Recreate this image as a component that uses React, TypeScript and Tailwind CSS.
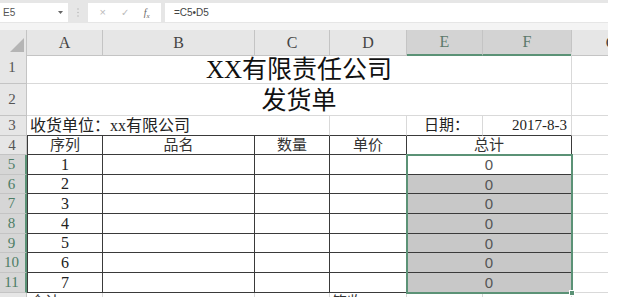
import React from 'react';

// Column letters with their widths (row header first)
const cols = ['A', 'B', 'C', 'D', 'E', 'F', 'G'];
const serif = "font-['Liberation_Serif','Noto_Sans_CJK_SC',serif]";
const gridCols = 'grid grid-cols-[27px_76px_152px_75px_77px_76px_89px_80px]';

const light = 'border-r border-b border-[#d9d9d9]';
const dark = 'border-r border-b border-[#3a3a3a]';

const bodyRows = [
  { n: 5, v: '1', h: 'h-[20px]' },
  { n: 6, v: '2', h: 'h-[19px]' },
  { n: 7, v: '3', h: 'h-[20px]' },
  { n: 8, v: '4', h: 'h-[20px]' },
  { n: 9, v: '5', h: 'h-[19px]' },
  { n: 10, v: '6', h: 'h-[20px]' },
  { n: 11, v: '7', h: 'h-[20px]' },
];

function RowHead({ n, active = false }: { n: number; active?: boolean }) {
  return (
    <div
      className={
        active
          ? 'flex items-center justify-center bg-[#d6d6d6] border-b border-[#c4c4c4] border-r-2 border-r-[#5b9276] text-[15px] leading-none text-[#4d7d65] pr-[2px]'
          : 'flex items-center justify-center bg-[#e6e6e6] border-b border-r border-[#c4c4c4] text-[15px] leading-none text-[#555] pr-[2px]'
      }
    >
      {n}
    </div>
  );
}

function FormulaBar() {
  return (
    <div className="h-[30px] w-[608px] bg-[#f4f4f4]">
      <div className="flex h-[23px] items-start gap-0 bg-[#e6e6e6] pt-[3px] font-['Liberation_Sans',sans-serif] text-[10px] text-[#555]">
        <div className="flex h-[19px] w-[68px] items-center justify-between bg-white pl-[3px] pr-[5px]">
          <span>E5</span>
          <svg width="5" height="3" viewBox="0 0 5 3">
            <path d="M0 0h5L2.5 3z" fill="#666" />
          </svg>
        </div>
        <div className="flex h-[19px] w-[20px] items-center justify-center">
          <svg width="2" height="9" viewBox="0 0 2 9">
            <circle cx="1" cy="1" r="0.8" fill="#bbb" />
            <circle cx="1" cy="4.5" r="0.8" fill="#bbb" />
            <circle cx="1" cy="8" r="0.8" fill="#bbb" />
          </svg>
        </div>
        <div className="flex h-[19px] w-[73px] items-center justify-around bg-white px-[4px] text-[#bbb]">
          <span className="text-[11px]">×</span>
          <span className="text-[10px]">✓</span>
          <span className="font-['Liberation_Serif',serif] text-[10px] italic text-[#666]">
            f<sub className="text-[7px]">x</sub>
          </span>
        </div>
        <div className="ml-[4px] flex h-[19px] flex-1 items-center bg-white pl-[9px] text-[#444]">=C5•D5</div>
      </div>
    </div>
  );
}

export default function App() {
  return (
    <div className={`relative h-[297px] w-[620px] overflow-hidden bg-white ${serif}`}>
      <FormulaBar />
      <div className="relative w-[608px] overflow-hidden">
        {/* column header */}
        <div className={`${gridCols} h-[22px]`}>
          <div className="flex items-end justify-end border-b border-r border-[#c4c4c4] bg-[#e6e6e6] pb-[2px] pr-[2px]">
            <svg width="15" height="15" viewBox="0 0 15 15">
              <path d="M15 0V15H0z" fill="#b5b5b5" />
            </svg>
          </div>
          {cols.map((c) => {
            const sel = c === 'E' || c === 'F';
            return (
              <div
                key={c}
                className={
                  sel
                    ? 'flex items-center justify-center border-r border-[#c4c4c4] border-b-2 border-b-[#5b9276] bg-[#d3d3d3] text-[16px] text-[#5b7a6a]'
                    : 'flex items-center justify-center border-b border-r border-[#c4c4c4] bg-[#e6e6e6] text-[16px] text-[#444]'
                }
              >
                {c}
              </div>
            );
          })}
        </div>

        {/* row 1: title */}
        <div className={`${gridCols} h-[32px]`}>
          <RowHead n={1} />
          <div className={`col-span-6 flex items-end justify-center pb-[1px] text-[25px] leading-none text-[#111] ${light}`}>
            XX有限责任公司
          </div>
          <div className={light} />
        </div>

        {/* row 2: subtitle */}
        <div className={`${gridCols} h-[32px]`}>
          <RowHead n={2} />
          <div className={`col-span-6 flex items-end justify-center pb-[2px] text-[25px] leading-none text-[#111] ${light}`}>
            发货单
          </div>
          <div className={light} />
        </div>

        {/* row 3: receiver and date */}
        <div className={`${gridCols} h-[20px]`}>
          <RowHead n={3} />
          <div className="col-span-3 flex items-center border-b border-r border-b-[#3a3a3a] border-r-[#d9d9d9] pl-[3px] text-[16px] leading-none text-[#222]">
            收货单位：xx有限公司
          </div>
          <div className="border-b border-r border-b-[#3a3a3a] border-r-[#d9d9d9]" />
          <div className="flex items-center justify-center border-b border-r border-b-[#3a3a3a] border-r-[#d9d9d9] pl-[4px] text-[15px] leading-none text-[#222]">
            日期：
          </div>
          <div className="flex items-center justify-end border-b border-r border-b-[#3a3a3a] border-r-[#d9d9d9] pr-[4px] text-[15px] leading-none text-[#222]">
            2017-8-3
          </div>
          <div className={light} />
        </div>

        {/* row 4: table header */}
        <div className={`${gridCols} h-[19px]`}>
          <RowHead n={4} />
          {['序列', '品名', '数量', '单价'].map((t, i) => (
            <div
              key={t}
              className={`flex items-center justify-center text-[15px] leading-none text-[#333] ${dark} ${i === 0 ? 'border-l' : ''}`}
            >
              {t}
            </div>
          ))}
          <div className={`col-span-2 flex items-center justify-center text-[15px] leading-none text-[#333] ${dark}`}>总计</div>
          <div className={light} />
        </div>

        {/* rows 5-11 */}
        {bodyRows.map((r, i) => (
          <div key={r.n} className={`${gridCols} ${r.h}`}>
            <RowHead n={r.n} active />
            <div className={`flex items-center justify-center border-l text-[16px] leading-none text-[#222] ${dark}`}>{r.v}</div>
            <div className={dark} />
            <div className={dark} />
            <div className={dark} />
            <div
              className={`col-span-2 flex items-center justify-center font-['Liberation_Sans',sans-serif] text-[15px] leading-none text-[#555] ${dark} ${
                i === 0 ? 'bg-white' : 'bg-[#c8c8c8]'
              }`}
            >
              0
            </div>
            <div className={light} />
          </div>
        ))}

        {/* row 12, cut off by the window */}
        <div className={`${gridCols} h-[20px]`}>
          <RowHead n={12} />
          <div className={`flex items-start pl-[3px] pt-[2px] text-[15px] leading-none text-[#333] ${light}`}>合计：</div>
          <div className={light} />
          <div className={light} />
          <div className={`flex items-start pl-[2px] pt-[2px] text-[15px] leading-none text-[#333] ${light}`}>签收：</div>
          <div className={light} />
          <div className={light} />
          <div className={light} />
        </div>

        {/* selection outline E5:F11 */}
        <div className="pointer-events-none absolute left-[406px] top-[124px] h-[140px] w-[167px] border-2 border-[#5b9276]">
          <div className="absolute -bottom-[4px] -right-[4px] h-[6px] w-[6px] border border-white bg-[#5b9276]" />
        </div>
      </div>
    </div>
  );
}
